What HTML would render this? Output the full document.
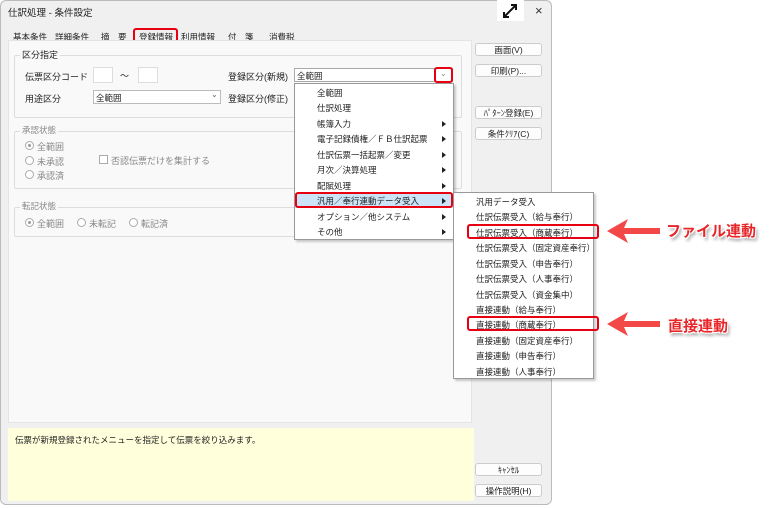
<!DOCTYPE html>
<html><head><meta charset="utf-8"><style>
*{box-sizing:border-box;margin:0;padding:0}
body{width:776px;height:508px;background:#fff;position:relative;overflow:hidden;font-family:"Liberation Sans","Noto Sans CJK JP",sans-serif;font-size:9px;color:#222}
.a{position:absolute;white-space:nowrap}
.win{left:0;top:0;width:552px;height:505px;background:#f0f0f0;border:1px solid #bbb;border-radius:6px}
.panel{left:8px;top:40px;width:464px;height:383px;background:#f9f9f9;border:1px solid #e4e4e4}
.grp{border:1px solid #ddd;border-radius:2px}
.gl{background:#f9f9f9;padding:0 2px}
.in{background:#fff;border:1px solid #ddd}
.cb{background:#fff;border:1px solid #aaa}
.btn{background:#fdfdfd;border:1px solid #ccc;border-radius:3px;text-align:center;line-height:12px;font-size:8.5px}
.rad{width:9px;height:9px;border:1px solid #aaa;border-radius:50%;background:#fff}
.rad.on::after{content:"";position:absolute;left:2px;top:2px;width:3px;height:3px;border-radius:50%;background:#999}
.gray{color:#888}
.menu{background:#fff;border:1px solid #999;box-shadow:2px 2px 2px rgba(0,0,0,.2)}
.mi{position:absolute;left:22px;font-size:8.5px}
.ar{position:absolute;right:7px;width:0;height:0;border-left:4px solid #222;border-top:3px solid transparent;border-bottom:3px solid transparent}
.red{border:2px solid #e60012;border-radius:3px}
.big{font-weight:bold;font-size:15px;color:#e8262a;text-shadow:-1px -1px 0 #fff,1px -1px 0 #fff,-1px 1px 0 #fff,1px 1px 0 #fff,2px 3px 3px rgba(0,0,0,.45)}
</style></head><body>
<div class="a win"></div>
<div class="a" style="left:8px;top:5px;font-size:9.5px">仕訳処理 - 条件設定</div>
<div class="a" style="left:497px;top:0;width:27px;height:21px;background:#fff"></div>
<svg class="a" style="left:502px;top:3px" width="16" height="16" viewBox="0 0 16 16"><path d="M2 14L14 2M9 2h5v5M2 9v5h5" stroke="#111" stroke-width="2" fill="none"/></svg>
<div class="a" style="left:535px;top:3px;font-size:13px;color:#333">×</div>
<div class="a" style="left:13px;top:31px;font-size:8.5px;word-spacing:0">基本条件</div>
<div class="a" style="left:55px;top:31px;font-size:8.5px">詳細条件</div>
<div class="a" style="left:101px;top:31px;font-size:8.5px">摘　要</div>
<div class="a" style="left:139px;top:31px;font-size:8.5px">登録情報</div>
<div class="a red" style="left:133px;top:28px;width:45px;height:15px"></div>
<div class="a" style="left:181px;top:31px;font-size:8.5px">利用情報</div>
<div class="a" style="left:228px;top:31px;font-size:8.5px">付　箋</div>
<div class="a" style="left:269px;top:31px;font-size:8.5px">消費税</div>
<div class="a panel"></div>
<div class="a grp" style="left:14px;top:55px;width:448px;height:63px"></div>
<div class="a gl" style="left:20px;top:48px;font-size:9px">区分指定</div>
<div class="a" style="left:25px;top:70px">伝票区分コード</div>
<div class="a in" style="left:93px;top:67px;width:20px;height:16px"></div>
<div class="a" style="left:120px;top:69px">～</div>
<div class="a in" style="left:138px;top:67px;width:20px;height:16px"></div>
<div class="a" style="left:228px;top:70px">登録区分(新規)</div>
<div class="a cb" style="left:294px;top:68px;width:159px;height:14px"></div>
<div class="a" style="left:297px;top:70px;font-size:8.5px">全範囲</div>
<div class="a red" style="left:434px;top:67px;width:19px;height:16px"></div>
<div class="a" style="left:440px;top:69px;font-size:8px;color:#888">⌄</div>
<div class="a" style="left:25px;top:92px">用途区分</div>
<div class="a cb" style="left:93px;top:90px;width:128px;height:14px;border-color:#bbb"></div>
<div class="a" style="left:96px;top:92px;font-size:8.5px">全範囲</div>
<div class="a" style="left:211px;top:90px;font-size:8px;color:#666">⌄</div>
<div class="a" style="left:228px;top:92px">登録区分(修正)</div>
<div class="a grp" style="left:14px;top:131px;width:448px;height:58px"></div>
<div class="a gl gray" style="left:20px;top:124px;font-size:8.5px">承認状態</div>
<div class="a rad on" style="left:25px;top:141px"></div><div class="a gray" style="left:37px;top:140px">全範囲</div>
<div class="a rad" style="left:25px;top:156px"></div><div class="a gray" style="left:37px;top:155px">未承認</div>
<div class="a rad" style="left:25px;top:170px"></div><div class="a gray" style="left:37px;top:169px">承認済</div>
<div class="a" style="left:99px;top:155px;width:9px;height:9px;border:1px solid #aaa;background:#fff"></div>
<div class="a gray" style="left:111px;top:154px">否認伝票だけを集計する</div>
<div class="a grp" style="left:14px;top:207px;width:448px;height:30px"></div>
<div class="a gl gray" style="left:20px;top:200px;font-size:8.5px">転記状態</div>
<div class="a rad on" style="left:25px;top:218px"></div><div class="a gray" style="left:37px;top:217px">全範囲</div>
<div class="a rad" style="left:77px;top:218px"></div><div class="a gray" style="left:89px;top:217px">未転記</div>
<div class="a rad" style="left:129px;top:218px"></div><div class="a gray" style="left:141px;top:217px">転記済</div>
<div class="a" style="left:8px;top:428px;width:466px;height:73px;background:#ffffdc"></div>
<div class="a" style="left:15px;top:434px;font-size:8.5px">伝票が新規登録されたメニューを指定して伝票を絞り込みます。</div>
<div class="a btn" style="left:475px;top:43px;width:67px;height:13px">画面(V)</div>
<div class="a btn" style="left:475px;top:64px;width:67px;height:13px">印刷(P)...</div>
<div class="a btn" style="left:475px;top:106px;width:67px;height:13px">ﾊﾟﾀｰﾝ登録(E)</div>
<div class="a btn" style="left:475px;top:127px;width:67px;height:13px">条件ｸﾘｱ(C)</div>
<div class="a btn" style="left:475px;top:463px;width:67px;height:13px">ｷｬﾝｾﾙ</div>
<div class="a btn" style="left:475px;top:484px;width:67px;height:13px">操作説明(H)</div>
<!-- main menu -->
<div class="a menu" style="left:294px;top:83px;width:160px;height:157px">
<div class="a" style="left:0;top:109px;width:158px;height:15px;background:#cce4f7"></div>
<div class="mi" style="top:3px">全範囲</div>
<div class="mi" style="top:18px">仕訳処理</div>
<div class="mi" style="top:34px">帳簿入力</div><div class="ar" style="top:37px"></div>
<div class="mi" style="top:49px">電子記録債権／ＦＢ仕訳起票</div><div class="ar" style="top:52px"></div>
<div class="mi" style="top:65px">仕訳伝票一括起票／変更</div><div class="ar" style="top:68px"></div>
<div class="mi" style="top:80px">月次／決算処理</div><div class="ar" style="top:83px"></div>
<div class="mi" style="top:96px">配賦処理</div><div class="ar" style="top:99px"></div>
<div class="mi" style="top:111px">汎用／奉行連動データ受入</div><div class="ar" style="top:114px"></div>
<div class="mi" style="top:127px">オプション／他システム</div><div class="ar" style="top:130px"></div>
<div class="mi" style="top:142px">その他</div><div class="ar" style="top:145px"></div>
</div>
<div class="a red" style="left:295px;top:192px;width:158px;height:16px"></div>
<!-- submenu -->
<div class="a menu" style="left:453px;top:192px;width:141px;height:187px">
<div class="mi" style="top:3px">汎用データ受入</div>
<div class="mi" style="top:18px">仕訳伝票受入（給与奉行）</div>
<div class="mi" style="top:34px">仕訳伝票受入（商蔵奉行）</div>
<div class="mi" style="top:49px">仕訳伝票受入（固定資産奉行）</div>
<div class="mi" style="top:65px">仕訳伝票受入（申告奉行）</div>
<div class="mi" style="top:80px">仕訳伝票受入（人事奉行）</div>
<div class="mi" style="top:96px">仕訳伝票受入（資金集中）</div>
<div class="mi" style="top:111px">直接連動（給与奉行）</div>
<div class="mi" style="top:126px">直接連動（商蔵奉行）</div>
<div class="mi" style="top:142px">直接連動（固定資産奉行）</div>
<div class="mi" style="top:157px">直接連動（申告奉行）</div>
<div class="mi" style="top:173px">直接連動（人事奉行）</div>
</div>
<div class="a red" style="left:467px;top:224px;width:132px;height:15px"></div>
<div class="a red" style="left:467px;top:316px;width:132px;height:15px"></div>
<svg class="a" style="left:600px;top:215px" width="70" height="130" viewBox="0 0 70 130">
<g fill="#f24848"><path d="M7 16L28 4L24 13H60V19H24L28 28Z"/><path d="M7 109L28 97L24 106H60V112H24L28 121Z"/></g></svg>
<div class="a big" style="left:666px;top:220px">ファイル連動</div>
<div class="a big" style="left:668px;top:315px">直接連動</div>
</body></html>
